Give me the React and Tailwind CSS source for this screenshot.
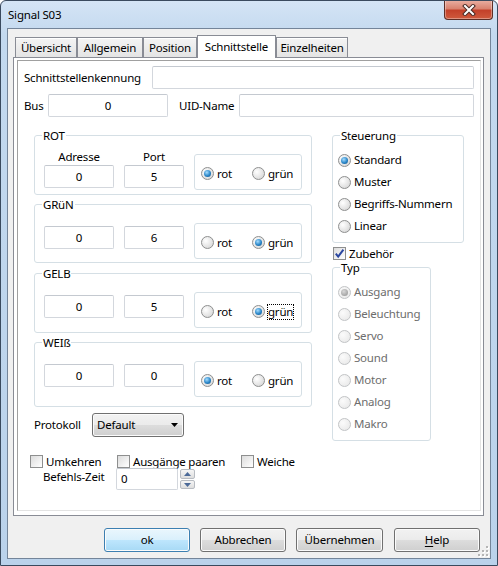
import React from 'react';

const tabs = [
  { label: 'Übersicht', w: 'w-[62px]' },
  { label: 'Allgemein', w: 'w-[66px]' },
  { label: 'Position', w: 'w-[54px]' },
  { label: 'Schnittstelle', w: 'w-[79px]', active: true },
  { label: 'Einzelheiten', w: 'w-[72px]' },
];

const signals = [
  { name: 'ROT', adr: '0', port: '5', sel: 'rot', box: 'h-[60px]', labels: true },
  { name: 'GRüN', adr: '0', port: '6', sel: 'grün', box: 'mt-[9px] h-[59px]' },
  { name: 'GELB', adr: '0', port: '5', sel: 'grün', box: 'mt-[10px] h-[60px]', focus: true },
  { name: 'WEIß', adr: '0', port: '0', sel: 'rot', box: 'mt-[9px] h-[65px]' },
];

const steuerung = ['Standard', 'Muster', 'Begriffs-Nummern', 'Linear'];
const typen = ['Ausgang', 'Beleuchtung', 'Servo', 'Sound', 'Motor', 'Analog', 'Makro'];

const Field = ({ value, className = '' }) => (
  <div className={`h-[23px] border border-[#d3d7dd] border-t-[#c4c9d0] rounded-[2px] bg-white flex items-center justify-center leading-none ${className}`}>
    {value}
  </div>
);

const Radio = ({ label, checked, disabled, focus, className = '' }) => (
  <div className={`flex items-center gap-[3px] ${className}`}>
    <span
      className={`w-[13px] h-[13px] shrink-0 rounded-full border flex items-center justify-center ${
        disabled
          ? 'border-[#c2c4c6] bg-[radial-gradient(circle_at_35%_35%,#fbfbfb,#e6e6e6)]'
          : 'border-[#8e8f8f] bg-[radial-gradient(circle_at_35%_35%,#ffffff,#d0d0d0)]'
      }`}
    >
      {checked && (
        <span
          className={`w-[7px] h-[7px] rounded-full ${
            disabled
              ? 'bg-[radial-gradient(circle_at_40%_35%,#d8d8d8,#8f8f8f)]'
              : 'bg-[radial-gradient(circle_at_40%_35%,#a6ddff,#2a86c8_55%,#0f4c80)]'
          }`}
        />
      )}
    </span>
    <span
      className={`leading-[14px] ${disabled ? 'text-[#6d6d6d]' : ''} ${
        focus ? 'outline-1 outline-dotted outline-black' : ''
      }`}
    >
      {label}
    </span>
  </div>
);

const Check = ({ label, checked, className = '' }) => (
  <div className={`flex items-center gap-[3px] ${className}`}>
    <span className="w-[13px] h-[13px] shrink-0 border border-[#8e8f8f] bg-[linear-gradient(135deg,#dcdcdc,#ffffff)] flex items-center justify-center">
      {checked && (
        <svg width="11" height="11" viewBox="0 0 11 11">
          <path d="M1.8 5.6 L4.2 8.6 L9.4 1.6" fill="none" stroke="#2b47a0" strokeWidth="2" />
        </svg>
      )}
    </span>
    <span className="leading-[13px]">{label}</span>
  </div>
);

const Group = ({ title, className = '', children }) => (
  <div className={`relative border border-[#d5dfe5] rounded-[3px] ${className}`}>
    {title && (
      <span className="absolute -top-[7px] left-[7px] bg-white px-[1px] leading-[13px]">{title}</span>
    )}
    {children}
  </div>
);

const Button = ({ children, def, className = '' }) => (
  <div
    className={`h-[24px] rounded-[3px] border flex items-center justify-center shadow-[inset_0_0_0_1px_#fbfbfb] ${
      def
        ? 'border-[#3c7fb1] bg-[linear-gradient(180deg,#eaf6fd_0%,#d9f0fc_50%,#bee6fd_50%,#a7d9f5_100%)]'
        : 'border-[#707070] bg-[linear-gradient(180deg,#f2f2f2_0%,#ebebeb_50%,#dddddd_50%,#cfcfcf_100%)]'
    } ${className}`}
  >
    {children}
  </div>
);

export default function App() {
  return (
    <div className="w-[498px] h-[566px] flex flex-col border border-[#3a4a5e] rounded-t-[6px] overflow-hidden bg-[linear-gradient(180deg,#d4e4f5_0%,#c3d9ef_6%,#bad2eb_100%)] font-['Noto_Sans',sans-serif] text-[11.5px] tracking-[-0.2px] text-black">
      {/* title bar */}
      <div className="h-[27px] shrink-0 flex items-start">
        <div className="h-[27px] pl-[7px] pt-[1px] flex items-center">Signal S03</div>
        <div className="ml-auto mr-[4px] -mt-[1px] w-[49px] h-[20px] rounded-b-[4px] border border-t-0 border-[#5d2f27] bg-[linear-gradient(180deg,#eab1a4_0%,#d98370_45%,#c4412a_55%,#cf5a3d_100%)] shadow-[inset_0_0_0_1px_rgba(255,255,255,0.35)] flex items-center justify-center">
          <svg width="14" height="12" viewBox="0 0 14 12">
            <path d="M3 2 L11 10 M11 2 L3 10" stroke="#4a2a24" strokeWidth="4" strokeLinecap="square" />
            <path d="M3 2 L11 10 M11 2 L3 10" stroke="#ffffff" strokeWidth="2" strokeLinecap="square" />
          </svg>
        </div>
      </div>

      {/* client area */}
      <div className="relative flex-1 mx-[6px] mb-[6px] border border-[#74859a] bg-[#f0f0f0] flex flex-col">
        <div className="ml-[5px] mt-[6px] w-[471px]">
          <div className="flex items-end h-[22px] pl-[2px]">
            {tabs.map((t) =>
              t.active ? (
                <div
                  key={t.label}
                  className={`${t.w} relative z-10 h-[23px] -mb-px border border-b-0 border-[#898c95] bg-white flex items-center justify-center pb-[1px]`}
                >
                  {t.label}
                </div>
              ) : (
                <div
                  key={t.label}
                  className={`${t.w} h-[20px] border border-b-0 border-[#898c95] bg-[linear-gradient(180deg,#f4f4f4,#e4e4e4)] shadow-[inset_0_1px_0_#ffffff] flex items-center justify-center pt-[1px]`}
                >
                  {t.label}
                </div>
              )
            )}
          </div>
          <div className="h-[459px] border border-[#898c95] bg-white pt-[2px] pl-[3px] pr-[2px] pb-[4px]">
            <div className="h-full border border-t-[#a0a0a0] border-l-[#a0a0a0] border-r-[#e3e3e3] border-b-[#e3e3e3] bg-white pt-[5px] px-[6px]">
              <div className="flex items-center h-[23px]">
                <span className="w-[128px]">Schnittstellenkennung</span>
                <Field className="w-[322px]" value="" />
              </div>
              <div className="mt-[5px] flex items-center h-[23px]">
                <span className="w-[24px]">Bus</span>
                <Field className="w-[120px]" value="0" />
                <span className="ml-[11px] w-[60px]">UID-Name</span>
                <Field className="w-[235px]" value="" />
              </div>

              <div className="mt-[18px] flex items-start">
                {/* left column */}
                <div className="ml-[6px] w-[282px] flex flex-col">
                  {signals.map((s) => (
                    <Group key={s.name} title={s.name} className={`ml-[4px] w-[278px] ${s.box}`}>
                      <div className="flex items-start pl-[9px] pt-[18px]">
                        <div className={s.labels ? '-mt-[4px] w-[70px] flex flex-col items-center' : 'mt-[3px] w-[70px]'}>
                          {s.labels && <span className="leading-[14px] mb-[1px]">Adresse</span>}
                          <Field className="w-[70px]" value={s.adr} />
                        </div>
                        <div className={s.labels ? '-mt-[4px] ml-[10px] w-[60px] flex flex-col items-center' : 'mt-[3px] ml-[10px] w-[60px]'}>
                          {s.labels && <span className="leading-[14px] mb-[1px]">Port</span>}
                          <Field className="w-[60px]" value={s.port} />
                        </div>
                        <div className="ml-[10px] w-[108px] h-[36px] border border-[#d5dfe5] rounded-[3px] flex items-center pl-[6px] pt-[3px]">
                          <Radio className="w-[51px]" label="rot" checked={s.sel === 'rot'} />
                          <Radio label="grün" checked={s.sel === 'grün'} focus={s.focus} />
                        </div>
                      </div>
                    </Group>
                  ))}

                  <div className="mt-[6px] ml-[4px] h-[24px] flex items-center">
                    <span className="w-[58px]">Protokoll</span>
                    <div className="w-[92px] h-[24px] rounded-[3px] border border-[#707070] bg-[linear-gradient(180deg,#f2f2f2_0%,#ebebeb_50%,#dddddd_50%,#cfcfcf_100%)] shadow-[inset_0_0_0_1px_#fbfbfb] flex items-center pl-[4px] pr-[5px]">
                      <span>Default</span>
                      <svg className="ml-auto" width="7" height="4" viewBox="0 0 7 4">
                        <path d="M0 0 H7 L3.5 4 Z" fill="#000" />
                      </svg>
                    </div>
                  </div>

                  <div className="mt-[17px] h-[14px] flex items-center">
                    <Check className="w-[87px]" label="Umkehren" />
                    <Check className="w-[124px]" label="Ausgänge paaren" />
                    <Check label="Weiche" />
                  </div>

                  <div className="h-[22px] flex items-start">
                    <span className="ml-[13px] w-[73px] leading-[15px] mt-[1px]">Befehls-Zeit</span>
                    <div className="w-[62px] h-[22px] border border-[#d3d7dd] border-t-[#c4c9d0] rounded-[2px] bg-white flex items-center pl-[4px]">0</div>
                    <div className="ml-[2px] w-[15px] flex flex-col">
                      <div className="mt-[1px] h-[10px] border border-[#b8bcc2] rounded-[2px] bg-[linear-gradient(180deg,#f6f6f6,#dedede)] flex items-center justify-center">
                        <svg width="7" height="4" viewBox="0 0 7 4">
                          <path d="M0 4 L3.5 0 L7 4 Z" fill="#4c6a98" />
                        </svg>
                      </div>
                      <div className="mt-[1px] h-[9px] border border-[#b8bcc2] rounded-[2px] bg-[linear-gradient(180deg,#f6f6f6,#dedede)] flex items-center justify-center">
                        <svg width="7" height="4" viewBox="0 0 7 4">
                          <path d="M0 0 H7 L3.5 4 Z" fill="#4c6a98" />
                        </svg>
                      </div>
                    </div>
                  </div>
                </div>

                {/* right column */}
                <div className="ml-[20px] w-[132px] flex flex-col">
                  <Group title="Steuerung" className="h-[108px] pt-[13px] pl-[5px]">
                    {steuerung.map((l, i) => (
                      <Radio key={l} className="h-[22px]" label={l} checked={i === 0} />
                    ))}
                  </Group>
                  <Check className="mt-[3px] h-[15px] pl-[1px]" label="Zubehör" checked />
                  <Group title="Typ" className="mt-[6px] w-[99px] h-[174px] pt-[13px] pl-[5px]">
                    {typen.map((l, i) => (
                      <Radio key={l} className="h-[22px]" label={l} checked={i === 0} disabled />
                    ))}
                  </Group>
                </div>
              </div>
            </div>
          </div>
        </div>

        <div className="mt-[12px] flex h-[24px]">
          <Button def className="ml-[96px] w-[86px]">ok</Button>
          <Button className="ml-[10px] w-[86px]">Abbrechen</Button>
          <Button className="ml-[10px] w-[87px]">Übernehmen</Button>
          <Button className="ml-[11px] w-[86px]">
            <span className="underline underline-offset-2">H</span>elp
          </Button>
        </div>

        <svg className="absolute right-[1px] bottom-[1px]" width="11" height="11" viewBox="0 0 11 11">
          {[[8, 0], [4, 4], [8, 4], [0, 8], [4, 8], [8, 8]].map(([x, y]) => (
            <g key={`${x}-${y}`}>
              <rect x={x + 1} y={y + 1} width="2" height="2" fill="#ffffff" />
              <rect x={x} y={y} width="2" height="2" fill="#b5b5b5" />
            </g>
          ))}
        </svg>
      </div>
    </div>
  );
}
